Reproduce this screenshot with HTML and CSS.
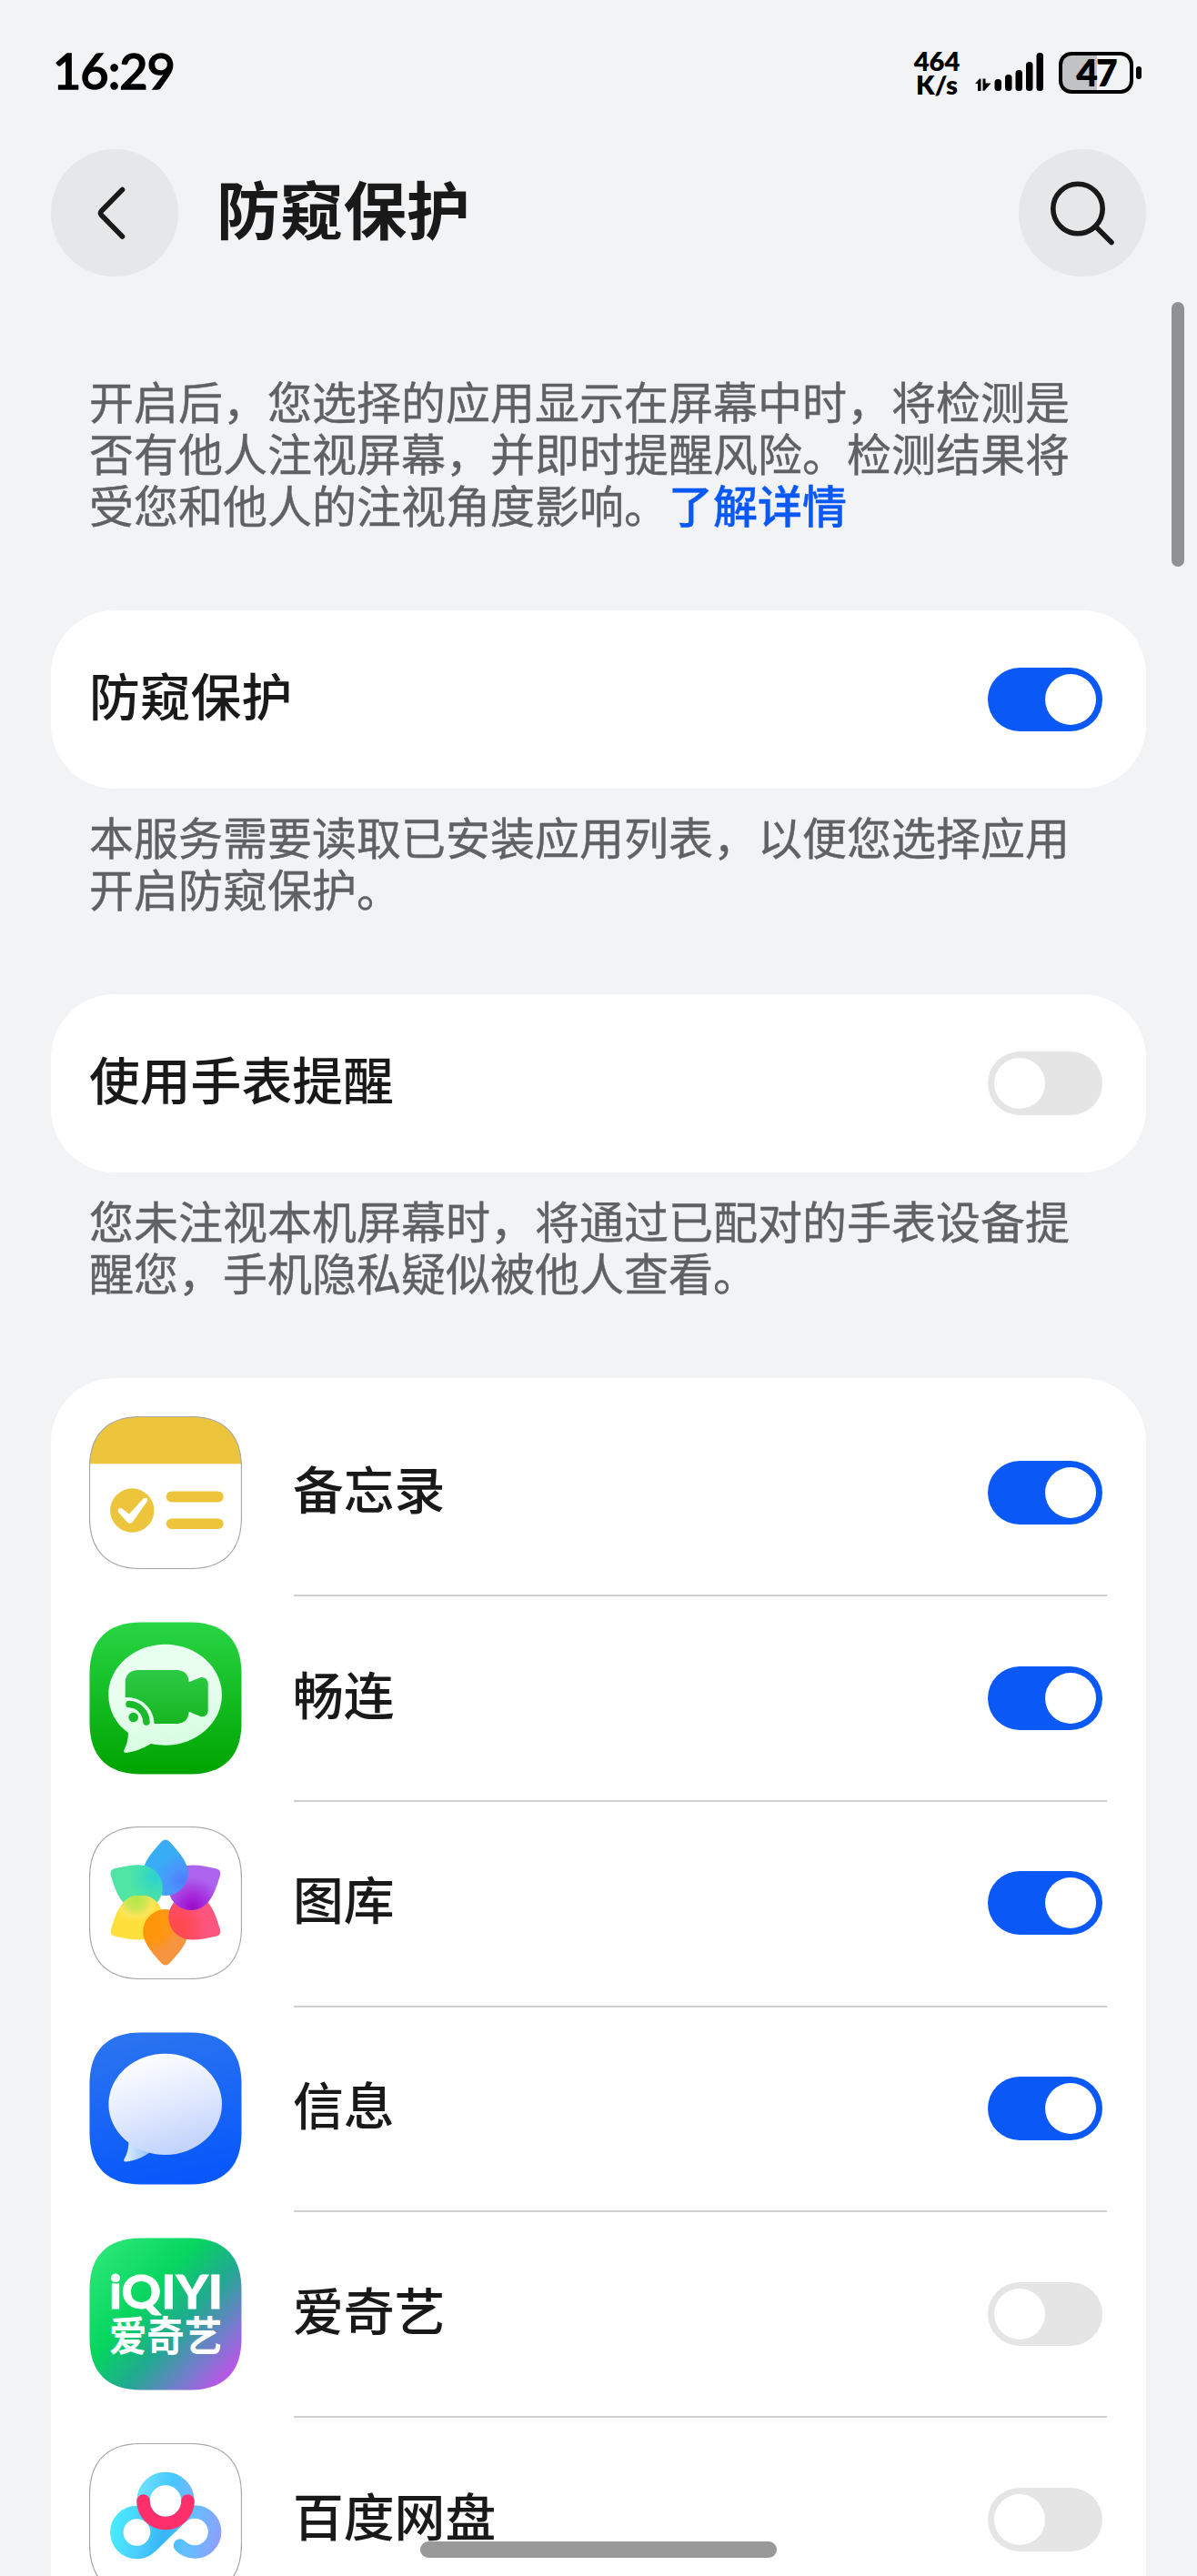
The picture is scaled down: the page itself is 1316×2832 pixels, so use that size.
FILE: index.html
```html
<!DOCTYPE html>
<html lang="zh-CN">
<head>
  <meta charset="UTF-8">
  <meta name="viewport" content="width=device-width, initial-scale=1">
  <title>防窥保护</title>
  <link rel="stylesheet" href="styles.css">
</head>
<body>
  <div class="screen">
    <div class="status-bar">
      <div class="time">16:29</div>
      <div class="status-icons">
        <div class="net-speed"><span>464</span><span>K/s</span></div>
        <svg class="signal" width="75" height="44" viewBox="0 0 75 44">
          <path d="M0 35 L5 29.500 H6.500 V43 H3 V35 Z M8.500 29.500 H11.500 V34.500 H17.500 L10.500 42.500 L8.500 43 Z"/>
          <rect x="21.500" y="30" width="7.500" height="13" rx="3.500"/>
          <rect x="33" y="25" width="7.500" height="18" rx="3.500"/>
          <rect x="44.500" y="20" width="7.500" height="23" rx="3.500"/>
          <rect x="56" y="11" width="7.500" height="32" rx="3.500"/>
          <rect x="67.500" y="1" width="7.500" height="42" rx="3.500"/>
        </svg>
        <div class="battery">
          <div class="battery-body"><span class="battery-level">47</span></div>
          <div class="battery-tip"></div>
        </div>
      </div>
    </div>

    <header class="title-bar">
      <button class="round-button" aria-label="返回">
        <svg width="140" height="140" viewBox="0 0 140 140"><path d="M78.500 44.500 L55.500 68 Q53.500 70.300 55.500 72.500 L78.500 96"/></svg>
      </button>
      <h1>防窥保护</h1>
      <button class="round-button" aria-label="搜索">
        <svg width="140" height="140" viewBox="0 0 140 140"><circle cx="65" cy="65.500" r="27.200"/><path d="M85 85.500 L102 102.500"/></svg>
      </button>
    </header>

    <main>
      <p class="intro">开启后，您选择的应用显示在屏幕中时，将检测是否有他人注视屏幕，并即时提醒风险。检测结果将受您和他人的注视角度影响。<a class="link">了解详情</a></p>

      <section class="card">
        <span class="label">防窥保护</span>
        <span class="toggle on"></span>
      </section>
      <p class="note">本服务需要读取已安装应用列表，以便您选择应用开启防窥保护。</p>

      <section class="card">
        <span class="label">使用手表提醒</span>
        <span class="toggle"></span>
      </section>
      <p class="note">您未注视本机屏幕时，将通过已配对的手表设备提醒您，手机隐私疑似被他人查看。</p>

      <section class="app-list">
        <div class="app-row">
          <svg class="app-icon" viewBox="0 0 168 168">
            <defs>
              <path id="tile" d="M.5 57 C.5 20 20 .5 57 .5 H111 C148 .5 167.500 20 167.500 57 V111 C167.500 148 148 167.500 111 167.500 H57 C20 167.500 .5 148 .5 111 Z"/>
              <clipPath id="tileClip"><use href="#tile"/></clipPath>
            </defs>
            <use href="#tile" fill="#fff"/>
            <rect width="168" height="52.300" fill="#edc53c" clip-path="url(#tileClip)"/>
            <use href="#tile" class="tile-line"/>
            <circle cx="47.300" cy="103.500" r="24.200" fill="#edc53c"/>
            <path d="M35.500 101 L44 107.500 L59.500 90.500 Q64.500 88 64.300 93 Q57 103 48 116 Q45 119.500 41.500 116 L32 105.500 Q31 100.500 35.500 101 Z" fill="#fff"/>
            <rect x="84.700" y="82.500" width="63" height="12" rx="6" fill="#edc53c"/>
            <rect x="84.700" y="112.500" width="63" height="11.500" rx="5.750" fill="#edc53c"/>
          </svg>
          <div class="app-cell"><span class="label">备忘录</span><span class="toggle on"></span></div>
        </div>

        <div class="app-row">
          <svg class="app-icon" viewBox="0 0 168 168">
            <defs>
              <linearGradient id="green" x1="0" y1="0" x2="0" y2="1"><stop offset="0" stop-color="#28d545"/><stop offset="1" stop-color="#00a400"/></linearGradient>
              <linearGradient id="mint" x1=".3" y1="0" x2=".6" y2="1"><stop offset="0" stop-color="#e8fff0"/><stop offset=".35" stop-color="#eafff0"/><stop offset="1" stop-color="#d5fde0"/></linearGradient>
              <linearGradient id="cam" x1="0" y1="0" x2="0" y2="1"><stop offset="0" stop-color="#2ccb45"/><stop offset="1" stop-color="#17b521"/></linearGradient>
            </defs>
            <use href="#tile" fill="url(#green)"/>
            <path d="M83.700 24.700 C118 24.700 146 49.500 146 80.200 C146 111 118 135.700 83.700 135.700 C78 135.700 73 135 68 134 C60 139 50 143 39.800 144 Q37.500 143.500 38.500 140.500 C41.500 135 43 129 43 122 C29 112 21.300 97 21.300 80.200 C21.300 49.500 49.500 24.700 83.700 24.700 Z" fill="url(#mint)"/>
            <path d="M53 53 H97 Q109 54 109.700 66.300 L123 61 Q129.500 60.500 130.700 67 V98 Q129.500 105 123 104.300 L109.700 98.700 Q109 111 97 112 H71.500 C71.500 95 57 82 39.700 83 V66 Q40.500 54 53 53 Z" fill="url(#cam)"/>
            <path d="M44 90.600 A20 20 0 0 1 63 110" fill="none" stroke="#1cb92b" stroke-width="7.500" stroke-linecap="round"/>
            <circle cx="48.700" cy="105" r="5.300" fill="#1cb92b"/>
          </svg>
          <div class="app-cell"><span class="label">畅连</span><span class="toggle on"></span></div>
        </div>

        <div class="app-row">
          <svg class="app-icon" viewBox="0 0 168 168">
            <defs>
              <path id="petal" d="M79.500 16.800 Q84 12.200 88.500 16.800 C95 24 102.500 32 106 40 A24.700 24.700 0 1 1 62 40 C65.500 32 73 24 79.500 16.800 Z"/>
              <radialGradient id="pBlue" gradientUnits="userSpaceOnUse" cx="103" cy="60" r="32"><stop offset="0" stop-color="#4e7cfa"/><stop offset=".5" stop-color="#4a97fb"/><stop offset="1" stop-color="#38adf6"/></radialGradient>
              <radialGradient id="pPurple" gradientUnits="userSpaceOnUse" cx="103" cy="60" r="32"><stop offset="0" stop-color="#9a0dc8"/><stop offset=".4" stop-color="#a529dc"/><stop offset="1" stop-color="#ac63ee"/></radialGradient>
              <radialGradient id="pPink" gradientUnits="userSpaceOnUse" cx="103" cy="60" r="34"><stop offset="0" stop-color="#fd4a48"/><stop offset=".5" stop-color="#fd4b5c"/><stop offset="1" stop-color="#fc557e"/></radialGradient>
              <radialGradient id="pOrange" gradientUnits="userSpaceOnUse" cx="103" cy="60" r="34"><stop offset="0" stop-color="#ff9408"/><stop offset=".6" stop-color="#fd960f"/><stop offset="1" stop-color="#f69440"/></radialGradient>
              <radialGradient id="pYellow" gradientUnits="userSpaceOnUse" cx="104" cy="57" r="26"><stop offset="0" stop-color="#b3e744"/><stop offset=".4" stop-color="#c9e653"/><stop offset=".75" stop-color="#fde45a"/><stop offset="1" stop-color="#fee03c"/></radialGradient>
              <radialGradient id="pGreen" gradientUnits="userSpaceOnUse" cx="103" cy="60" r="30"><stop offset="0" stop-color="#2bcfd0"/><stop offset=".5" stop-color="#3fdcb6"/><stop offset="1" stop-color="#50e5a4"/></radialGradient>
              <clipPath id="upper"><rect width="168" height="76"/></clipPath>
            </defs>
            <use href="#tile" fill="#fff"/><use href="#tile" class="tile-line"/>
            <use href="#petal" fill="url(#pGreen)" transform="rotate(-60 84 83.500)"/>
            <use href="#petal" fill="url(#pYellow)" transform="rotate(-120 84 83.500)"/>
            <use href="#petal" fill="url(#pOrange)" transform="rotate(180 84 83.500)"/>
            <use href="#petal" fill="url(#pPink)" transform="rotate(120 84 83.500)"/>
            <use href="#petal" fill="url(#pPurple)" transform="rotate(60 84 83.500)"/>
            <use href="#petal" fill="url(#pBlue)"/>
            <!-- first petal again, so that it also lies over the last one -->
            <g clip-path="url(#upper)"><use href="#petal" fill="url(#pGreen)" transform="rotate(-60 84 83.500)"/></g>
          </svg>
          <div class="app-cell"><span class="label">图库</span><span class="toggle on"></span></div>
        </div>

        <div class="app-row">
          <svg class="app-icon" viewBox="0 0 168 168">
            <defs>
              <linearGradient id="blue" x1=".4" y1="0" x2=".6" y2="1"><stop offset="0" stop-color="#2a74f0"/><stop offset="1" stop-color="#0757fb"/></linearGradient>
              <linearGradient id="bubble" x1=".3" y1="0" x2=".65" y2="1"><stop offset="0" stop-color="#fff"/><stop offset=".5" stop-color="#e2eafe"/><stop offset="1" stop-color="#bfd1fb"/></linearGradient>
              <linearGradient id="tail" x1="0" y1="0" x2="1" y2="0"><stop offset="0" stop-color="#e0edff"/><stop offset="1" stop-color="#94c2fb"/></linearGradient>
            </defs>
            <use href="#tile" fill="url(#blue)"/>
            <path d="M43.500 119 C43.500 128 41.500 135 38.500 139.500 Q37.500 143 40.500 142.500 C50 141.500 60 137.500 67 132 Z" fill="url(#tail)"/>
            <ellipse cx="83.700" cy="79.300" rx="62.300" ry="55.600" fill="url(#bubble)"/>
          </svg>
          <div class="app-cell"><span class="label">信息</span><span class="toggle on"></span></div>
        </div>

        <div class="app-row">
          <svg class="app-icon" viewBox="0 0 168 168">
            <defs>
              <linearGradient id="iqiyi" x1="0" y1=".05" x2="1" y2=".95"><stop offset="0" stop-color="#30e97a"/><stop offset=".38" stop-color="#06d560"/><stop offset=".6" stop-color="#22a892"/><stop offset=".78" stop-color="#737dcd"/><stop offset=".92" stop-color="#b657e4"/><stop offset="1" stop-color="#c855e8"/></linearGradient>
            </defs>
            <use href="#tile" fill="url(#iqiyi)"/>
            <text class="logo-latin" x="22" y="77.500" textLength="125" lengthAdjust="spacingAndGlyphs">iQIYI</text>
            <text class="logo-han" x="22" y="125" textLength="124" lengthAdjust="spacingAndGlyphs">爱奇艺</text>
          </svg>
          <div class="app-cell"><span class="label">爱奇艺</span><span class="toggle"></span></div>
        </div>

        <div class="app-row">
          <svg class="app-icon" viewBox="0 0 168 168">
            <defs>
              <linearGradient id="panTop" gradientUnits="userSpaceOnUse" x1="55" y1="50" x2="116" y2="62"><stop offset="0" stop-color="#6fe0fb"/><stop offset=".55" stop-color="#45c8ff"/><stop offset="1" stop-color="#7fb2fd"/></linearGradient>
              <linearGradient id="panBase" gradientUnits="userSpaceOnUse" x1="24" y1="80" x2="144" y2="105"><stop offset="0" stop-color="#45effd"/><stop offset=".3" stop-color="#4ccdff"/><stop offset=".5" stop-color="#36b5f5"/><stop offset=".7" stop-color="#5fc2ff"/><stop offset="1" stop-color="#8e9ffd"/></linearGradient>
            </defs>
            <use href="#tile" fill="#fff"/><use href="#tile" class="tile-line"/>
            <g fill="none" stroke-width="14.500" stroke-linecap="round">
              <path d="M68 113.500 A22 22 0 1 1 68 82.500 M68 113.500 L100 82.500 A22 22 0 1 1 100 112.500 M52.600 120 A22 22 0 0 0 68 82.500" stroke="url(#panBase)"/>
              <circle cx="84" cy="63.500" r="24.500" stroke="url(#panTop)"/>
              <path d="M59.500 63.500 A24.500 24.500 0 0 0 108.500 63.500" stroke="#ff2f6c"/>
            </g>
          </svg>
          <div class="app-cell"><span class="label">百度网盘</span><span class="toggle"></span></div>
        </div>
      </section>
    </main>

    <div class="scrollbar"></div>
    <div class="home-bar"></div>
  </div>
</body>
</html>
```

FILE: styles.css
```css
:root {
  --bg: #f1f3f5;
  --text: #191919;
  --text-secondary: #606162;
  --accent: #0a59f7;
  --off: #e5e5e5;
}
* {
  box-sizing: border-box;
}
body {
  margin: 0;
  background: var(--bg);
  color: var(--text);
  font-family: "Noto Sans CJK SC", sans-serif;
}
.screen {
  position: relative;
  width: 1316px;
  height: 2832px;
  overflow: hidden;
}

/* status bar */
.status-bar {
  display: flex;
  justify-content: space-between;
  height: 164px;
  padding: 54px 61px 0 58px;
  color: #000;
  font-family: Lato, sans-serif;
}
.time {
  height: 48px;
  line-height: 48px;
  font-size: 54px;
  font-weight: 500;
  letter-spacing: -1px;
  -webkit-text-stroke: 1.5px #000;
}
.status-icons {
  display: flex;
  align-items: flex-start;
}
.net-speed {
  display: flex;
  flex-direction: column;
  align-items: center;
  width: 52px;
  margin-right: 16px;
  font-size: 29px;
  font-weight: 800;
  line-height: 26px;
}
.signal {
  margin: 3px 16px 0 0;
}
.battery {
  display: flex;
  align-items: center;
  gap: 3px;
  margin-top: 3px;
}
.battery-body {
  width: 82px;
  height: 46px;
  margin-left: 1px;
  border: 4px solid #000;
  border-radius: 14px;
  background: linear-gradient(to right, #c1c2c4 38px, transparent 38px);
}
.battery-level {
  display: block;
  text-align: center;
  font-size: 41px;
  font-weight: 800;
  line-height: 38px;
  letter-spacing: -2px;
}
.battery-tip {
  width: 6px;
  height: 14px;
  border-radius: 3px;
  background: #000;
}

/* title */
.title-bar {
  display: flex;
  align-items: center;
  height: 140px;
  padding: 0 56px;
}
.round-button {
  width: 140px;
  height: 140px;
  padding: 0;
  border: none;
  border-radius: 50%;
  background: #e6e7e9;
}
.round-button svg {
  display: block;
  fill: none;
  stroke: #191919;
  stroke-width: 5.6;
  stroke-linecap: round;
}
h1 {
  flex: 1;
  margin: 0 0 12px 42px;
  font-size: 69.7px;
  font-weight: 700;
  line-height: 84px;
}

/* texts between the cards */
.intro,
.note {
  margin: 0;
  padding: 0 98px;
  color: var(--text-secondary);
  font-size: 49px;
  line-height: 57px;
  -webkit-text-stroke: 0.4px;
}
.intro {
  height: 367px;
  padding-top: 107px;
}
.note {
  height: 226px;
  padding-top: 23px;
}
.link {
  color: var(--accent);
  font-weight: 500;
}

/* cards */
.card {
  display: flex;
  align-items: center;
  justify-content: space-between;
  height: 196px;
  margin: 0 56px;
  padding: 0 48px 0 42px;
  border-radius: 70px;
  background: #fff;
}
.label {
  padding-bottom: 12px;
  font-size: 55.8px;
  font-weight: 500;
  line-height: 66px;
}
.toggle {
  display: flex;
  flex: none;
  width: 126px;
  height: 70px;
  padding: 7px;
  border-radius: 35px;
  background: var(--off);
}
.toggle::before {
  content: "";
  width: 56px;
  height: 56px;
  border-radius: 50%;
  background: #fff;
}
.toggle.on {
  justify-content: flex-end;
  background: var(--accent);
}

/* app list */
.app-list {
  margin: 0 56px;
  padding: 14.5px 43px 0 42px;
  border-radius: 70px 70px 0 0;
  background: #fff;
}
.app-row {
  display: flex;
  align-items: center;
  height: 225.7px;
}
.app-icon {
  flex: none;
  width: 168px;
  height: 168px;
  margin: 0 57px 2.5px 0;
}
.app-cell {
  display: flex;
  flex: 1;
  align-items: center;
  justify-content: space-between;
  height: 100%;
  padding: 0 5px 0.5px 0;
  border-bottom: 2px solid #d0d0d0;
}
.app-cell .label {
  margin-left: -1px;
}
.tile-line {
  fill: none;
  stroke: #a6a6a6;
  stroke-width: 1.2;
}
.logo-latin {
  fill: #fff;
  stroke: #fff;
  stroke-width: 0.8;
  font: 900 51px Lato, sans-serif;
}
.logo-han {
  fill: #fff;
  font: 700 45px "Noto Sans CJK SC", sans-serif;
}

/* overlays */
.scrollbar {
  position: absolute;
  top: 332px;
  right: 14px;
  width: 14px;
  height: 291px;
  border-radius: 7px;
  background: #909193;
}
.home-bar {
  position: absolute;
  left: 462px;
  bottom: 20px;
  width: 392px;
  height: 18px;
  border-radius: 9px;
  background: #999;
}
```
